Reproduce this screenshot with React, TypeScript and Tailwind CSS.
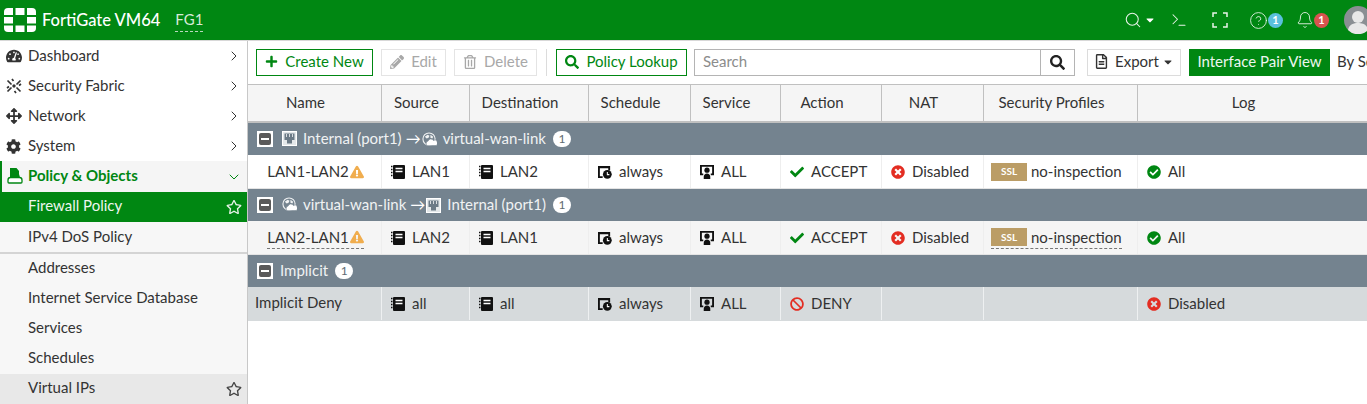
import React from 'react';
import { Bell, ChevronDown, ChevronRight, CircleHelp, Search, Terminal } from 'lucide-react';
import { FaArrowsAlt, FaBan, FaCaretDown, FaCheck, FaCheckCircle, FaCog, FaExclamationTriangle, FaPencilAlt, FaPlus, FaRegFileAlt, FaRegStar, FaRegTrashAlt, FaSearch, FaTachometerAlt, FaTimesCircle } from 'react-icons/fa';

const COLS = 'grid grid-cols-[133px_88px_119px_102px_90px_101px_102px_154px_1fr]';

const Logo = () => (
    <svg width="32" height="24" viewBox="0 0 32 24" fill="#fff">
        <path d="M0 7V4a4 4 0 0 1 4-4h5v7z" />
        <rect x="11.5" width="9" height="7" />
        <path d="M23 0h5a4 4 0 0 1 4 4v3h-9z" />
        <rect y="9" width="9" height="6.5" />
        <rect x="23" y="9" width="9" height="6.5" />
        <path d="M0 17.5h9V24H4a4 4 0 0 1-4-4z" />
        <rect x="11.5" y="17.5" width="9" height="6.5" />
        <path d="M23 17.5h9V20a4 4 0 0 1-4 4h-5z" />
    </svg>
);

const FabricIcon = () => (
    <svg width="16" height="16" viewBox="0 0 16 16" fill="none" stroke="#333" strokeWidth="1.700">
        <path d="M1.500 2.500l4 4M14.500 2.500l-4 4M1.500 13.500l4-4M14.500 13.500l-4-4M6.800 6.800l2.400 2.400M9.200 6.800L6.800 9.200M6 1l1.500 2M10 15l-1.500-2M1 10l2-1.500M15 6l-2 1.500" />
    </svg>
);

const PolicyIcon = () => (
    <svg width="16" height="17" viewBox="0 0 16 17">
        <path d="M3 1h6.500L12 4v3l1 3.500H3z" fill="#008712" />
        <path d="M1 13c0-1.500 1-2.500 2.500-2.500h9c1.500 0 2.500 1 2.500 2.500v2c0 .6-.4 1-1 1H2c-.6 0-1-.4-1-1z" fill="#fff" stroke="#008712" strokeWidth="1.300" />
    </svg>
);

const AddressIcon = () => (
    <svg width="14" height="14" viewBox="0 0 14 14" className="shrink-0">
        <rect x="2" y="0" width="12" height="14" rx="1" fill="#111" />
        <path d="M4.500 3.500h7M4.500 6.500h7" stroke="#fff" strokeWidth="1.300" />
        <path d="M0 1.500h1.500M0 4.500h1.500M0 7.500h1.500M0 10.500h1.500" stroke="#111" strokeWidth="1.300" />
    </svg>
);

const ScheduleIcon = () => (
    <svg width="14" height="14" viewBox="0 0 15 15" className="shrink-0">
        <path d="M0 1h13v5h-2V3.500H2V12h3v2H0z" fill="#111" />
        <circle cx="10" cy="10" r="4.700" fill="#111" />
        <path d="M10 7.500v2.800h2.200" stroke="#fff" strokeWidth="1.100" fill="none" />
    </svg>
);

const ServiceIcon = () => (
    <svg width="14" height="14" viewBox="0 0 15 15" className="shrink-0">
        <path d="M0 0h15v11h-3.500V9h1.500V2H2v7h1.500v2H0z" fill="#111" />
        <circle cx="7.500" cy="5.500" r="2.800" fill="#111" />
        <path d="M4 15v-2.500c0-2 1.500-3.500 3.500-3.500s3.500 1.500 3.500 3.500V15z" fill="#111" />
    </svg>
);

const PortIcon = () => (
    <svg width="15" height="15" viewBox="0 0 15 15" className="shrink-0">
        <rect x="0.500" y="0.500" width="14" height="14" fill="#e4e8ea" stroke="#fff" />
        <path d="M2.500 2.500h10v6.500h-2.500v3.500h-5V9H2.500z" fill="#6b7a86" />
        <path d="M4.500 3v3M7.500 3v3M10.500 3v3" stroke="#e4e8ea" strokeWidth="0.900" />
    </svg>
);

const WanIcon = () => (
    <svg width="15" height="15" viewBox="0 0 16 16" className="shrink-0">
        <circle cx="7.500" cy="7.500" r="6.500" fill="none" stroke="#f0f2f3" strokeWidth="1.200" />
        <path d="M3 5l3-2 2 1-1 2-2 1zM9 3l3 2-1 2-2-1z" fill="#f0f2f3" />
        <path d="M6 14.500a2.500 2.500 0 0 1 .5-4.800 3 3 0 0 1 5.500-.7 3 3 0 0 1 3 5.500z" fill="#fff" stroke="#74838f" strokeWidth="0.600" />
    </svg>
);

const CollapseBox = () => (
    <span className="flex items-center justify-center w-[16px] h-[16px] bg-white shrink-0">
        <span className="flex items-center justify-center w-[12px] h-[12px] rounded-[2px] bg-[#5a5a5a]">
            <span className="w-[8px] h-[2px] bg-white" />
        </span>
    </span>
);

const CountBadge = () => (
    <span className="flex items-center justify-center ml-[1px] w-[18px] h-[16px] rounded-full bg-white text-[#5f6b73] text-[12px] leading-none">1</span>
);

const NavItem = ({ icon, label }: { icon: React.ReactNode; label: string }) => (
    <div className="flex items-center h-[30px] pl-[6px] pr-[5px] text-[#333]">
        <span className="w-[22px] flex items-center">{icon}</span>
        <span className="flex-1 pb-[2px]">{label}</span>
        <ChevronRight size={16} strokeWidth={1.500} className="text-[#333]" />
    </div>
);

const SubItem = ({ label, star, className = '' }: { label: string; star?: boolean; className?: string }) => (
    <div className={`flex items-center h-[30px] pl-[28px] pr-[5px] text-[#333] ${className}`}>
        <span className="flex-1 pb-[3px]">{label}</span>
        {star && <FaRegStar size={16} className="text-[#444]" />}
    </div>
);

const Button = ({ icon, label, className = '' }: { icon: React.ReactNode; label: string; className?: string }) => (
    <div className={`flex items-center justify-center shrink-0 gap-[7px] h-[27px] pb-[2px] border ${className}`}>
        {icon}
        <span>{label}</span>
    </div>
);

const Th = ({ label, first }: { label: string; first?: boolean }) => (
    <div className={`flex items-center justify-center pr-[18px] pb-[2px] ${first ? '' : 'border-l border-[#c0c0c0]'}`}>{label}</div>
);

const Cell = ({ icon, label, dashed }: { icon?: React.ReactNode; label?: string; dashed?: boolean }) => (
    <div className="flex items-center gap-[7px] pl-[9px] border-l border-[#eeeeee]">
        {icon}
        {label && <span className={dashed ? 'border-b border-dashed border-[#777]' : ''}>{label}</span>}
    </div>
);

const GroupRow = ({ children }: { children: React.ReactNode }) => (
    <div className="flex items-center gap-[6px] h-[32px] pl-[9px] bg-[#74838f] text-[#f0f2f3] [&>span]:mb-[1px]">{children}</div>
);

type RowProps = { name: string; src: string; dst: string; dashed?: boolean; shaded?: boolean };

const PolicyRow = ({ name, src, dst, dashed, shaded }: RowProps) => (
    <div className={`${COLS} h-[34px] text-[#333] border-b border-[#e4e4e4] ${shaded ? 'bg-[#f5f5f5]' : 'bg-white'}`}>
        <div className="flex items-center justify-center pl-[2px]">
            <span className={`flex items-center gap-[1px] ${dashed ? 'border-b border-dashed border-[#777]' : ''}`}>
                {name}
                <FaExclamationTriangle size={14} className="text-[#f0ad4e]" />
            </span>
        </div>
        <Cell icon={<AddressIcon />} label={src} />
        <Cell icon={<AddressIcon />} label={dst} />
        <Cell icon={<ScheduleIcon />} label="always" />
        <Cell icon={<ServiceIcon />} label="ALL" />
        <Cell icon={<FaCheck size={14} className="text-[#008712]" />} label="ACCEPT" />
        <Cell icon={<FaTimesCircle size={14} className="text-[#e32d22]" />} label="Disabled" />
        <div className="flex items-center pl-[7px] border-l border-[#eeeeee]">
            <span className={`flex items-center gap-[4px] ${dashed ? 'border-b border-dashed border-[#777]' : ''}`}>
                <span className="flex items-center justify-center w-[36px] h-[18px] bg-[#bb9d66] text-white text-[10px] font-bold">SSL</span>
                no-inspection
            </span>
        </div>
        <Cell icon={<FaCheckCircle size={14} className="text-[#008712]" />} label="All" />
    </div>
);

export default function App() {
    return (
        <div className="w-[1367px] h-[404px] overflow-hidden bg-white text-[15px] font-['Lato','sans-serif']">
            <header className="flex items-center h-[41px] pl-[4px] bg-[#008712] text-white border-b border-[#d8d8d8]">
                <Logo />
                <span className="ml-[6px] text-[16.500px] font-medium">FortiGate VM64</span>
                <span className="ml-[15px] text-[#d6ead8] border-b border-dashed border-[#b8d8bc]">FG1</span>
                <div className="ml-auto flex items-center">
                    <Search size={18} strokeWidth={1.400} className="text-[#e8f3e9]" />
                    <FaCaretDown size={12} className="ml-[2px]" />
                    <Terminal size={18} strokeWidth={1.400} className="ml-[14px] text-[#e8f3e9]" />
                    <svg width="16" height="16" viewBox="0 0 16 16" fill="none" stroke="#e8f3e9" strokeWidth="1.500" className="ml-[24px]">
                        <path d="M1 5V1h4M11 1h4v4M15 11v4h-4M5 15H1v-4" />
                    </svg>
                    <CircleHelp size={19} strokeWidth={1.100} className="ml-[21px] text-[#e8f3e9]" />
                    <span className="flex items-center justify-center w-[15px] h-[15px] rounded-full bg-[#5bc0de] text-[11px] font-bold">1</span>
                    <Bell size={18} strokeWidth={1.200} className="ml-[13px] text-[#e8f3e9]" />
                    <span className="flex items-center justify-center w-[15px] h-[15px] rounded-full bg-[#d9534f] text-[11px] font-bold">1</span>
                    <svg width="28" height="28" viewBox="0 0 28 28" className="ml-[15px] mr-[-5px]">
                        <circle cx="14" cy="14" r="14" fill="#8a8f93" />
                        <circle cx="14" cy="11" r="6" fill="#e8e8e8" />
                        <path d="M4 24c1-6 6-7 10-7s9 1 10 7a14 14 0 0 1-20 0z" fill="#e8e8e8" />
                    </svg>
                </div>
            </header>
            <div className="flex h-[363px]">
                <aside className="w-[248px] shrink-0 border-r border-[#c8c8c8] bg-[#f7f7f7] overflow-hidden">
                    <div className="bg-white">
                        <NavItem icon={<FaTachometerAlt size={16} className="text-[#333]" />} label="Dashboard" />
                        <NavItem icon={<FabricIcon />} label="Security Fabric" />
                        <NavItem icon={<FaArrowsAlt size={16} className="text-[#333]" />} label="Network" />
                        <NavItem icon={<FaCog size={15} className="text-[#333]" />} label="System" />
                    </div>
                    <div className="flex items-center h-[31px] pl-[5px] pr-[5px] pb-[2px] border-l-2 border-[#008712] text-[#008712] font-bold bg-[#f5f5f5]">
                        <span className="w-[21px] flex items-center"><PolicyIcon /></span>
                        <span className="flex-1">Policy &amp; Objects</span>
                        <ChevronDown size={16} strokeWidth={1.500} className="mt-[2px]" />
                    </div>
                    <SubItem label="Firewall Policy" star className="!text-[#eef6ef] bg-[#008712] [&_svg]:text-[#e8f3e9]" />
                    <div className="h-[1px]" />
                    <SubItem label="IPv4 DoS Policy" className="border-b-2 border-[#d4d4d4] h-[31px]" />
                    <SubItem label="Addresses" />
                    <SubItem label="Internet Service Database" />
                    <SubItem label="Services" />
                    <SubItem label="Schedules" />
                    <SubItem label="Virtual IPs" star className="bg-[#e8e8e8]" />
                </aside>
                <main className="flex-1 min-w-0 text-[#333] overflow-hidden">
                    <div className="flex items-center h-[43px] pl-[8px] whitespace-nowrap">
                        <Button icon={<FaPlus size={13} />} label="Create New" className="w-[117px] border-[#008712] text-[#008712]" />
                        <Button icon={<FaPencilAlt size={14} />} label="Edit" className="ml-[8px] w-[65px] border-[#e4e4e4] text-[#a8a8a8]" />
                        <Button icon={<FaRegTrashAlt size={14} />} label="Delete" className="ml-[8px] w-[83px] border-[#e4e4e4] text-[#a8a8a8]" />
                        <div className="ml-[9px] w-[1px] h-[27px] shrink-0 bg-[#dcdcdc]" />
                        <Button icon={<FaSearch size={14} />} label="Policy Lookup" className="ml-[9px] w-[131px] border-[#008712] text-[#008712]" />
                        <div className="ml-[7px] flex items-center shrink-0 w-[381px] h-[27px] border border-[#b4b4b4]">
                            <span className="flex-1 pl-[8px] pb-[2px] text-[#8c8c8c]">Search</span>
                            <span className="flex items-center justify-center w-[34px] h-full border-l border-[#b4b4b4]"><FaSearch size={15} className="text-[#222]" /></span>
                        </div>
                        <div className="ml-[12px] flex items-center justify-center shrink-0 gap-[6px] w-[94px] h-[27px] pb-[2px] border border-[#dcdcdc]">
                            <FaRegFileAlt size={15} />
                            <span>Export</span>
                            <FaCaretDown size={12} className="ml-[-3px]" />
                        </div>
                        <div className="ml-[8px] flex items-center justify-center shrink-0 w-[141px] h-[27px] pb-[2px] bg-[#008712] text-[#eef6ef]">Interface Pair View</div>
                        <div className="pl-[7px] pb-[2px] shrink-0">By Sequence</div>
                    </div>
                    <div className={`${COLS} h-[39px] border-t border-b-2 border-[#c0c0c0] bg-[#f5f5f5]`}>
                        <Th first label="Name" />
                        <Th label="Source" />
                        <Th label="Destination" />
                        <Th label="Schedule" />
                        <Th label="Service" />
                        <Th label="Action" />
                        <Th label="NAT" />
                        <Th label="Security Profiles" />
                        <Th label="Log" />
                    </div>
                    <GroupRow>
                        <CollapseBox />
                        <span className="ml-[3px]"><PortIcon /></span>
                        <span>Internal (port1)</span>
                        <span className="ml-[-2px] mr-[-5px] text-[#fff]">→</span>
                        <WanIcon />
                        <span>virtual-wan-link</span>
                        <CountBadge />
                    </GroupRow>
                    <PolicyRow name="LAN1-LAN2" src="LAN1" dst="LAN2" />
                    <GroupRow>
                        <CollapseBox />
                        <span className="ml-[3px]"><WanIcon /></span>
                        <span>virtual-wan-link</span>
                        <span className="ml-[-2px] mr-[-5px] text-[#fff]">→</span>
                        <PortIcon />
                        <span>Internal (port1)</span>
                        <CountBadge />
                    </GroupRow>
                    <PolicyRow name="LAN2-LAN1" src="LAN2" dst="LAN1" dashed shaded />
                    <GroupRow>
                        <CollapseBox />
                        <span className="ml-[1px]">Implicit</span>
                        <CountBadge />
                    </GroupRow>
                    <div className={`${COLS} h-[34px] pb-[1px] bg-[#d6dadc] text-[#333] [&>div]:border-[#eef0f1]`}>
                        <div className="flex items-start pt-[4px] pl-[7px]">Implicit Deny</div>
                        <Cell icon={<AddressIcon />} label="all" />
                        <Cell icon={<AddressIcon />} label="all" />
                        <Cell icon={<ScheduleIcon />} label="always" />
                        <Cell icon={<ServiceIcon />} label="ALL" />
                        <Cell icon={<FaBan size={14} className="text-[#e32d22]" />} label="DENY" />
                        <Cell />
                        <Cell />
                        <Cell icon={<FaTimesCircle size={14} className="text-[#e32d22]" />} label="Disabled" />
                    </div>
                </main>
            </div>
        </div>
    );
}
